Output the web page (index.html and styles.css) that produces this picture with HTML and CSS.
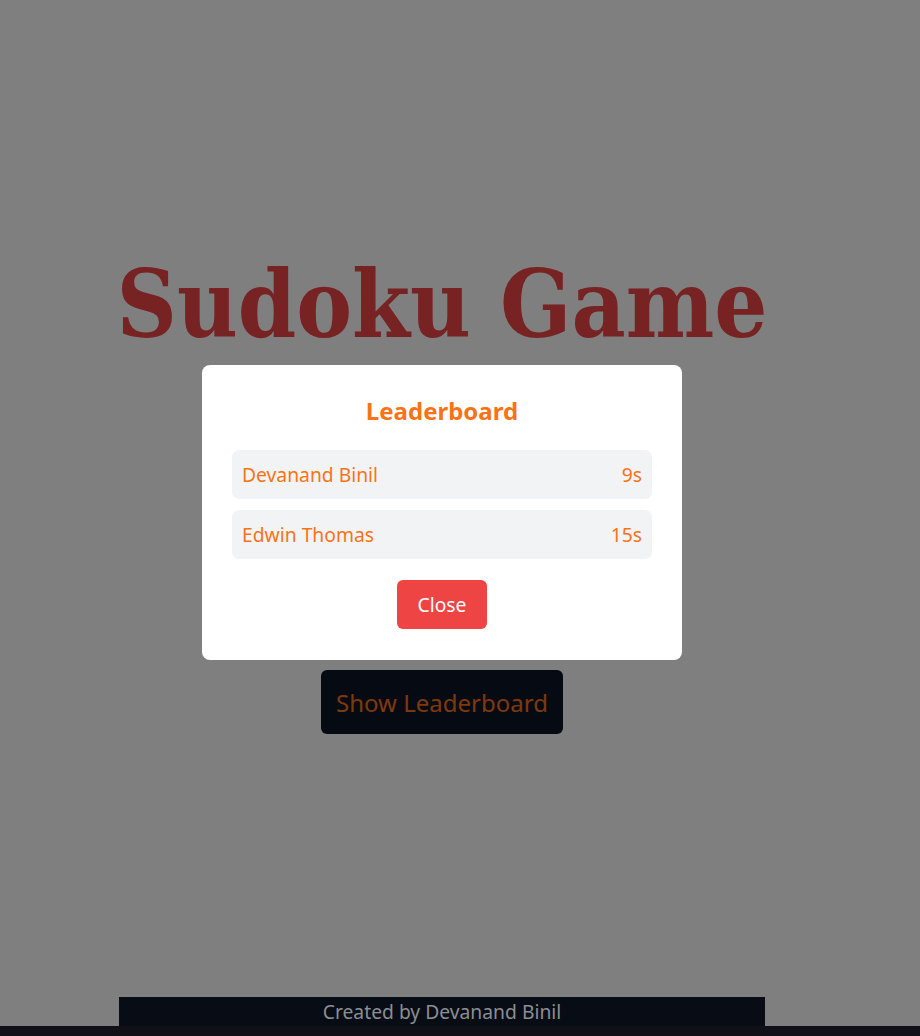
FILE: index.html
```html
<!DOCTYPE html>
<html lang="en">
<head>
<meta charset="utf-8">
<title>Sudoku Game</title>
<link rel="stylesheet" href="styles.css">
</head>
<body>
<div class="page">
  <div class="container">
    <h1 class="title">Sudoku Game</h1>
    <button class="show-btn">Show Leaderboard</button>
    <footer class="footer">Created by Devanand Binil</footer>
  </div>
</div>
<div class="overlay">
  <div class="modal">
    <h2 class="modal-title">Leaderboard</h2>
    <ul class="board">
      <li class="row"><span>Devanand Binil</span><span>9s</span></li>
      <li class="row"><span>Edwin Thomas</span><span>15s</span></li>
    </ul>
    <button class="close-btn">Close</button>
  </div>
</div>
</body>
</html>
```
FILE: styles.css
```css
html, body {
  margin: 0;
  padding: 0;
  background: #24202f;
  font-family: "Noto Sans", "Open Sans", sans-serif;
}
.page {
  background: #ffffff;
  height: 1026px;
  padding-right: 36px;
  display: flex;
  justify-content: center;
}
.container {
  width: 646px;
  display: flex;
  flex-direction: column;
  align-items: center;
}
.title {
  margin: 258px 0 0;
  font-family: "DejaVu Serif Condensed", "DejaVu Serif", serif;
  font-stretch: condensed;
  font-weight: 700;
  font-size: 93px;
  line-height: 93px;
  color: #f04646;
  white-space: nowrap;
}
.show-btn {
  margin-top: 319px;
  width: 242px;
  height: 64px;
  border: none;
  border-radius: 6px;
  background: #0d1527;
  color: #f97316;
  font-family: inherit;
  font-size: 24px;
  padding: 0;
}
.footer {
  margin-top: auto;
  width: 100%;
  height: 29px;
  line-height: 29px;
  text-align: center;
  background: #080c14;
  color: #8b8e94;
  font-size: 19.3px;
  position: relative;
  z-index: 20;
}
.overlay {
  position: fixed;
  inset: 0;
  background: rgba(0, 0, 0, 0.5);
  display: flex;
  justify-content: center;
  align-items: center;
  padding: 0 36px 11px 0;
  z-index: 10;
}
.modal {
  width: 480px;
  box-sizing: border-box;
  background: #ffffff;
  border-radius: 8px;
  padding: 30px 30px 31px;
  display: flex;
  flex-direction: column;
  align-items: center;
}
.modal-title {
  margin: 0 0 23px;
  font-size: 24px;
  line-height: 32px;
  font-weight: 700;
  color: #f97316;
}
.board {
  list-style: none;
  margin: 0;
  padding: 0;
  width: 100%;
  display: flex;
  flex-direction: column;
  gap: 11px;
}
.row {
  height: 49px;
  box-sizing: border-box;
  padding: 0 10px;
  border-radius: 7px;
  background: #f2f3f5;
  display: flex;
  justify-content: space-between;
  align-items: center;
  color: #f97316;
  font-size: 19.3px;
}
.close-btn {
  margin-top: 21px;
  width: 90px;
  height: 49px;
  border: none;
  border-radius: 6px;
  background: #ef4444;
  color: #ffffff;
  font-family: inherit;
  font-size: 19.3px;
  padding: 0;
}
```
